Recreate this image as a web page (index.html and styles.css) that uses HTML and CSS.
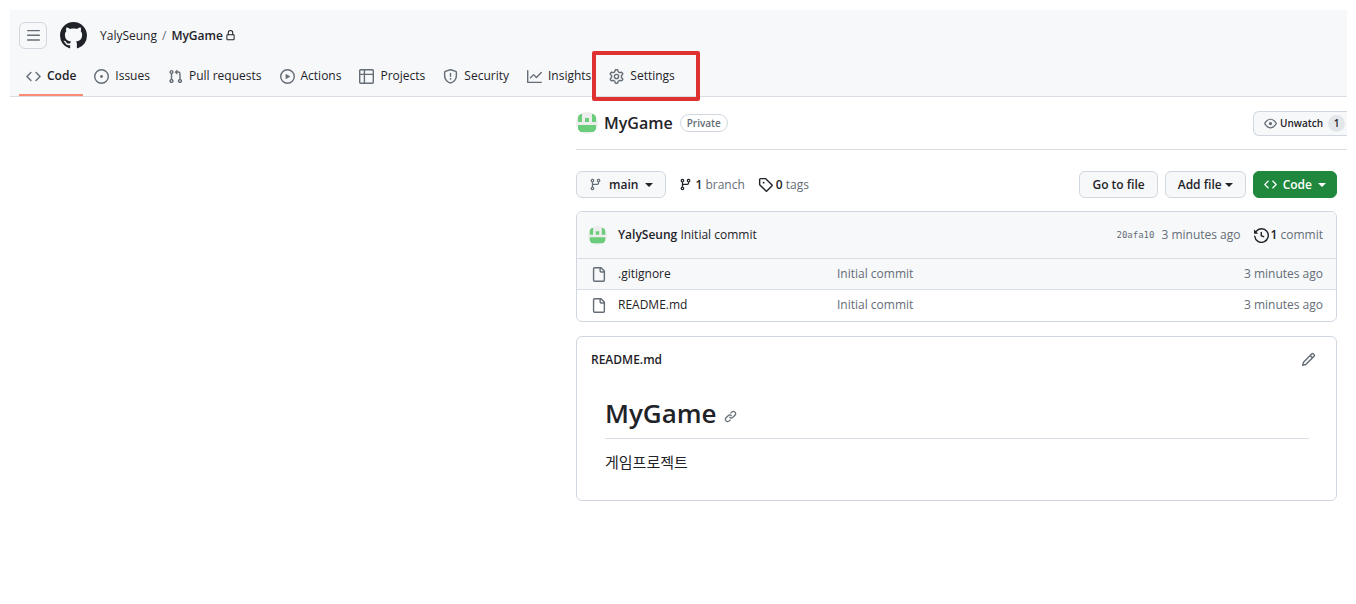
FILE: index.html
```html
<!DOCTYPE html>
<html lang="en">
<head>
<meta charset="utf-8">
<meta name="viewport" content="width=device-width, initial-scale=1">
<title>YalySeung/MyGame</title>
<link rel="stylesheet" href="styles.css">
</head>
<body>
<svg class="sprite" aria-hidden="true">
  <symbol id="i-menu" viewBox="0 0 16 16"><path d="M1 2.75A.75.75 0 0 1 1.75 2h12.500a.75.75 0 0 1 0 1.500H1.750A.75.75 0 0 1 1 2.750Zm0 5A.75.75 0 0 1 1.750 7h12.500a.75.75 0 0 1 0 1.500H1.750A.75.75 0 0 1 1 7.750ZM1.750 12h12.500a.75.75 0 0 1 0 1.500H1.750a.75.75 0 0 1 0-1.500Z"/></symbol>
  <symbol id="i-mark" viewBox="0 0 16 16"><path d="M8 0c4.42 0 8 3.58 8 8a8.013 8.013 0 0 1-5.450 7.590c-.4.080-.550-.170-.550-.380 0-.270.010-1.130.010-2.200 0-.750-.250-1.230-.540-1.480 1.780-.2 3.650-.880 3.650-3.950 0-.880-.310-1.590-.820-2.150.080-.2.360-1.020-.080-2.120 0 0-.670-.220-2.200.820-.640-.180-1.320-.270-2-.270-.680 0-1.360.090-2 .270-1.530-1.030-2.200-.820-2.200-.820-.440 1.100-.160 1.920-.080 2.120-.510.560-.820 1.280-.820 2.150 0 3.060 1.860 3.750 3.640 3.950-.230.200-.440.550-.510 1.070-.460.210-1.610.550-2.330-.660-.150-.240-.600-.830-1.230-.820-.670.010-.270.380.010.530.340.190.730.900.820 1.130.160.450.680 1.310 2.690.940 0 .670.010 1.300.010 1.490 0 .210-.150.450-.550.380A7.995 7.995 0 0 1 0 8c0-4.420 3.580-8 8-8Z"/></symbol>
  <symbol id="i-lock" viewBox="0 0 16 16"><path d="M4 4a4 4 0 0 1 8 0v2h.25c.966 0 1.750.784 1.750 1.750v5.500A1.750 1.750 0 0 1 12.250 15h-8.500A1.750 1.750 0 0 1 2 13.250v-5.500C2 6.784 2.784 6 3.750 6H4Zm8.250 3.500h-8.500a.25.25 0 0 0-.25.25v5.500c0 .138.112.25.25.25h8.500a.25.25 0 0 0 .25-.25v-5.500a.25.25 0 0 0-.25-.25ZM10.500 6V4a2.500 2.500 0 1 0-5 0v2Z"/></symbol>
  <symbol id="i-code" viewBox="0 0 16 16"><path d="m11.280 3.220 4.250 4.250a.75.75 0 0 1 0 1.060l-4.250 4.250a.749.749 0 0 1-1.275-.326.749.749 0 0 1 .215-.734L13.940 8l-3.720-3.720a.749.749 0 0 1 .326-1.275.749.749 0 0 1 .734.215Zm-6.560 0a.751.751 0 0 1 1.042.018.751.751 0 0 1 .018 1.042L2.060 8l3.720 3.720a.749.749 0 0 1-.326 1.275.749.749 0 0 1-.734-.215L.47 8.530a.75.75 0 0 1 0-1.060Z"/></symbol>
  <symbol id="i-issue" viewBox="0 0 16 16"><path d="M8 9.500a1.500 1.500 0 1 0 0-3 1.500 1.500 0 0 0 0 3Z"/><path d="M8 0a8 8 0 1 1 0 16A8 8 0 0 1 8 0ZM1.500 8a6.500 6.500 0 1 0 13 0 6.500 6.500 0 0 0-13 0Z"/></symbol>
  <symbol id="i-pull" viewBox="0 0 16 16"><path d="M1.500 3.250a2.250 2.250 0 1 1 3 2.122v5.256a2.251 2.251 0 1 1-1.500 0V5.372A2.250 2.250 0 0 1 1.500 3.250Zm5.677-.177L9.573.677A.25.25 0 0 1 10 .854V2.500h1A2.500 2.500 0 0 1 13.500 5v5.628a2.251 2.251 0 1 1-1.500 0V5a1 1 0 0 0-1-1h-1v1.646a.25.25 0 0 1-.427.177L7.177 3.427a.25.25 0 0 1 0-.354ZM3.750 2.500a.75.75 0 1 0 0 1.500.75.75 0 0 0 0-1.500Zm0 9.500a.75.75 0 1 0 0 1.500.75.75 0 0 0 0-1.500Zm8.250.75a.75.75 0 1 0 1.500 0 .75.75 0 0 0-1.500 0Z"/></symbol>
  <symbol id="i-play" viewBox="0 0 16 16"><path d="M8 0a8 8 0 1 1 0 16A8 8 0 0 1 8 0ZM1.500 8a6.500 6.500 0 1 0 13 0 6.500 6.500 0 0 0-13 0Zm4.879-2.773 4.264 2.559a.25.25 0 0 1 0 .428l-4.264 2.559A.25.25 0 0 1 6 10.559V5.442a.25.25 0 0 1 .379-.215Z"/></symbol>
  <symbol id="i-table" viewBox="0 0 16 16"><path d="M0 1.750C0 .784.784 0 1.750 0h12.500C15.216 0 16 .784 16 1.750v12.500A1.750 1.750 0 0 1 14.250 16H1.750A1.750 1.750 0 0 1 0 14.250ZM6.500 6.500v8h7.750a.25.25 0 0 0 .25-.25V6.500Zm8-1.500V1.750a.25.25 0 0 0-.25-.25H6.500V5Zm-13 1.500v7.750c0 .138.112.25.25.25H5v-8ZM5 5V1.500H1.750a.25.25 0 0 0-.25.25V5Z"/></symbol>
  <symbol id="i-shield" viewBox="0 0 16 16"><path d="M7.467.133a1.748 1.748 0 0 1 1.066 0l5.250 1.680A1.750 1.750 0 0 1 15 3.480V7c0 1.566-.320 3.182-1.303 4.682-.983 1.498-2.585 2.813-5.032 3.855a1.697 1.697 0 0 1-1.330 0c-2.447-1.042-4.049-2.357-5.032-3.855C1.320 10.182 1 8.566 1 7V3.480a1.750 1.750 0 0 1 1.217-1.667Zm.61 1.429a.25.25 0 0 0-.153 0l-5.250 1.680a.25.25 0 0 0-.174.238V7c0 1.358.275 2.666 1.057 3.860.784 1.194 2.121 2.340 4.366 3.297a.196.196 0 0 0 .154 0c2.245-.956 3.582-2.104 4.366-3.298C13.225 9.666 13.500 8.360 13.500 7V3.480a.251.251 0 0 0-.174-.237l-5.250-1.680ZM8.750 4.750v3a.75.75 0 0 1-1.500 0v-3a.75.75 0 0 1 1.500 0ZM9 10.500a1 1 0 1 1-2 0 1 1 0 0 1 2 0Z"/></symbol>
  <symbol id="i-graph" viewBox="0 0 16 16"><path d="M1.500 1.750V13.500h13.750a.75.75 0 0 1 0 1.500H.75a.75.75 0 0 1-.75-.75V1.750a.75.75 0 0 1 1.500 0Zm14.280 2.530-5.250 5.250a.75.75 0 0 1-1.060 0L7 7.060 4.280 9.780a.751.751 0 0 1-1.042-.018.751.751 0 0 1-.018-1.042l3.250-3.250a.75.75 0 0 1 1.060 0L10 7.940l4.720-4.720a.751.751 0 0 1 1.042.018.751.751 0 0 1 .018 1.042Z"/></symbol>
  <symbol id="i-gear" viewBox="0 0 16 16"><path d="M8 0a8.200 8.200 0 0 1 .701.031C9.444.095 9.990.645 10.160 1.290l.288 1.107c.018.066.079.158.212.224.231.114.454.243.668.386.123.082.233.090.299.071l1.103-.303c.644-.176 1.392.021 1.820.630.270.385.506.792.704 1.218.315.675.111 1.422-.364 1.891l-.814.806c-.049.048-.098.147-.088.294.016.257.016.515 0 .772-.010.147.038.246.088.294l.814.806c.475.469.679 1.216.364 1.891a7.977 7.977 0 0 1-.704 1.217c-.428.610-1.176.807-1.820.630l-1.102-.302c-.067-.019-.177-.011-.300.071a5.909 5.909 0 0 1-.668.386c-.133.066-.194.158-.211.224l-.290 1.106c-.168.646-.715 1.196-1.458 1.260a8.006 8.006 0 0 1-1.402 0c-.743-.064-1.289-.614-1.458-1.260l-.289-1.106c-.018-.066-.079-.158-.212-.224a5.738 5.738 0 0 1-.668-.386c-.123-.082-.233-.090-.299-.071l-1.103.303c-.644.176-1.392-.021-1.820-.630a8.120 8.120 0 0 1-.704-1.218c-.315-.675-.111-1.422.363-1.891l.815-.806c.050-.048.098-.147.088-.294a6.214 6.214 0 0 1 0-.772c.010-.147-.038-.246-.088-.294l-.815-.806C.635 6.045.431 5.298.746 4.623a7.920 7.920 0 0 1 .704-1.217c.428-.610 1.176-.807 1.820-.630l1.102.302c.067.019.177.011.300-.071.214-.143.437-.272.668-.386.133-.066.194-.158.211-.224l.290-1.106C6.009.645 6.556.095 7.299.030 7.530.010 7.764 0 8 0Zm-.571 1.525c-.036.003-.108.036-.137.146l-.289 1.105c-.147.561-.549.967-.998 1.189-.173.086-.340.183-.500.290-.417.278-.970.423-1.529.270l-1.103-.303c-.109-.030-.175.016-.195.045-.220.312-.412.644-.573.990-.014.031-.021.110.059.190l.815.806c.411.406.562.957.530 1.456a4.709 4.709 0 0 0 0 .582c.032.499-.119 1.050-.530 1.456l-.815.806c-.081.080-.073.159-.059.190.162.346.353.677.573.989.020.030.085.076.195.046l1.102-.303c.560-.153 1.113-.008 1.530.270.161.107.328.204.501.290.447.222.850.629.997 1.189l.289 1.105c.029.109.101.143.137.146a6.600 6.600 0 0 0 1.142 0c.036-.003.108-.036.137-.146l.289-1.105c.147-.561.549-.967.998-1.189.173-.086.340-.183.500-.290.417-.278.970-.423 1.529-.270l1.103.303c.109.029.175-.016.195-.045.220-.313.411-.644.573-.990.014-.031.021-.110-.059-.190l-.815-.806c-.411-.406-.562-.957-.530-1.456a4.709 4.709 0 0 0 0-.582c-.032-.499.119-1.050.530-1.456l.815-.806c.081-.080.073-.159.059-.190a6.464 6.464 0 0 0-.573-.989c-.020-.030-.085-.076-.195-.046l-1.102.303c-.560.153-1.113.008-1.530-.270a4.440 4.440 0 0 0-.501-.290c-.447-.222-.850-.629-.997-1.189l-.289-1.105c-.029-.110-.101-.143-.137-.146a6.600 6.600 0 0 0-1.142 0ZM11 8a3 3 0 1 1-6 0 3 3 0 0 1 6 0ZM9.500 8a1.500 1.500 0 1 0-3.001.001A1.500 1.500 0 0 0 9.500 8Z"/></symbol>
  <symbol id="i-eye" viewBox="0 0 16 16"><path d="M8 2c1.981 0 3.671.992 4.933 2.078 1.270 1.091 2.187 2.345 2.637 3.023a1.620 1.620 0 0 1 0 1.798c-.450.678-1.367 1.932-2.637 3.023C11.670 13.008 9.981 14 8 14c-1.981 0-3.671-.992-4.933-2.078C1.797 10.830.880 9.576.430 8.898a1.620 1.620 0 0 1 0-1.798c.450-.677 1.367-1.931 2.637-3.022C4.330 2.992 6.019 2 8 2ZM1.679 7.932a.12.12 0 0 0 0 .136c.411.622 1.241 1.750 2.366 2.717C5.176 11.758 6.527 12.500 8 12.500c1.473 0 2.825-.742 3.955-1.715 1.124-.967 1.954-2.096 2.366-2.717a.12.12 0 0 0 0-.136c-.412-.621-1.242-1.750-2.366-2.717C10.824 4.242 9.473 3.500 8 3.500c-1.473 0-2.825.742-3.955 1.715-1.124.967-1.954 2.096-2.366 2.717ZM8 10a2 2 0 1 1-.001-3.999A2 2 0 0 1 8 10Z"/></symbol>
  <symbol id="i-branch" viewBox="0 0 16 16"><path d="M9.500 3.250a2.250 2.250 0 1 1 3 2.122V6A2.500 2.500 0 0 1 10 8.500H6a1 1 0 0 0-1 1v1.128a2.251 2.251 0 1 1-1.500 0V5.372a2.250 2.250 0 1 1 1.500 0v1.836A2.493 2.493 0 0 1 6 7h4a1 1 0 0 0 1-1v-.628A2.250 2.250 0 0 1 9.500 3.250Zm-6 0a.75.75 0 1 0 1.500 0 .75.75 0 0 0-1.500 0Zm8.250-.75a.75.75 0 1 0 0 1.500.75.75 0 0 0 0-1.500ZM4.250 12a.75.75 0 1 0 0 1.500.75.75 0 0 0 0-1.500Z"/></symbol>
  <symbol id="i-tag" viewBox="0 0 16 16"><path d="M1 7.775V2.750C1 1.784 1.784 1 2.750 1h5.025c.464 0 .910.184 1.238.513l6.250 6.250a1.750 1.750 0 0 1 0 2.474l-5.026 5.026a1.750 1.750 0 0 1-2.474 0l-6.250-6.250A1.752 1.752 0 0 1 1 7.775Zm1.500 0c0 .066.026.130.073.177l6.250 6.250a.25.25 0 0 0 .354 0l5.025-5.025a.25.25 0 0 0 0-.354l-6.250-6.250a.25.25 0 0 0-.177-.073H2.750a.25.25 0 0 0-.25.25ZM6 5a1 1 0 1 1 0 2 1 1 0 0 1 0-2Z"/></symbol>
  <symbol id="i-history" viewBox="0 0 16 16"><path d="m.427 1.927 1.215 1.215a8.002 8.002 0 1 1-1.600 5.685.75.75 0 1 1 1.493-.154 6.500 6.500 0 1 0 1.180-4.458l1.358 1.358A.25.25 0 0 1 3.896 6H.25A.25.25 0 0 1 0 5.750V2.104a.25.25 0 0 1 .427-.177ZM7.750 4a.75.75 0 0 1 .75.75v2.992l2.028.812a.75.75 0 0 1-.557 1.392l-2.500-1A.751.751 0 0 1 7 8.250v-3.500A.75.75 0 0 1 7.750 4Z"/></symbol>
  <symbol id="i-file" viewBox="0 0 16 16"><path d="M2 1.750C2 .784 2.784 0 3.750 0h6.586c.464 0 .909.184 1.237.513l2.914 2.914c.329.328.513.773.513 1.237v9.586A1.750 1.750 0 0 1 13.250 16h-9.500A1.750 1.750 0 0 1 2 14.250Zm1.750-.25a.25.25 0 0 0-.25.25v12.500c0 .138.112.25.25.25h9.500a.25.25 0 0 0 .25-.25V6h-2.750A1.750 1.750 0 0 1 9 4.250V1.500Zm6.750.062V4.250c0 .138.112.25.25.25h2.688l-.011-.013-2.914-2.914-.013-.011Z"/></symbol>
  <symbol id="i-pencil" viewBox="0 0 16 16"><path d="M11.013 1.427a1.750 1.750 0 0 1 2.474 0l1.086 1.086a1.750 1.750 0 0 1 0 2.474l-8.610 8.610c-.210.210-.470.364-.756.445l-3.251.930a.75.75 0 0 1-.927-.928l.929-3.250c.081-.286.235-.547.445-.758l8.610-8.610Zm.176 4.823L9.750 4.810l-6.286 6.287a.253.253 0 0 0-.064.108l-.558 1.953 1.953-.558a.253.253 0 0 0 .108-.064Zm1.238-3.763a.25.25 0 0 0-.354 0L10.811 3.750l1.439 1.440 1.263-1.263a.25.25 0 0 0 0-.354Z"/></symbol>
  <symbol id="i-link" viewBox="0 0 16 16"><path d="m7.775 3.275 1.250-1.250a3.500 3.500 0 1 1 4.950 4.950l-2.500 2.500a3.500 3.500 0 0 1-4.950 0 .751.751 0 0 1 .018-1.042.751.751 0 0 1 1.042-.018 1.998 1.998 0 0 0 2.830 0l2.500-2.500a2.002 2.002 0 0 0-2.830-2.830l-1.250 1.250a.751.751 0 0 1-1.042-.018.751.751 0 0 1-.018-1.042Zm-4.690 9.640a1.998 1.998 0 0 0 2.830 0l1.250-1.250a.751.751 0 0 1 1.042.018.751.751 0 0 1 .018 1.042l-1.250 1.250a3.500 3.500 0 1 1-4.950-4.950l2.500-2.500a3.500 3.500 0 0 1 4.950 0 .751.751 0 0 1-.018 1.042.751.751 0 0 1-1.042.018 1.998 1.998 0 0 0-2.830 0l-2.500 2.500a1.998 1.998 0 0 0 0 2.830Z"/></symbol>
  <symbol id="i-avatar" viewBox="0 0 22 22"><path fill="#ededed" d="M0 0h22v22H0z"/><path fill="#6bcd7b" d="M2 2h4v8H2zM16 2h4v8h-4zM9 6h4v4H9zM2 13h18v7H2z"/></symbol>
</svg>

<div class="page">
  <header class="header">
    <div class="topbar">
      <button class="menu-button" type="button" aria-label="Open menu"><svg class="icon"><use href="#i-menu"/></svg></button>
      <a class="home" href="#" aria-label="Homepage"><svg class="mark"><use href="#i-mark"/></svg></a>
      <nav class="crumbs" aria-label="Breadcrumb">
        <a href="#">YalySeung</a><span class="slash">/</span><a class="current" href="#">MyGame</a><svg class="icon-xs"><use href="#i-lock"/></svg>
      </nav>
    </div>
    <nav class="tabs" aria-label="Repository">
      <a class="tab selected" href="#"><svg class="icon"><use href="#i-code"/></svg>Code</a>
      <a class="tab" href="#"><svg class="icon"><use href="#i-issue"/></svg>Issues</a>
      <a class="tab" href="#"><svg class="icon"><use href="#i-pull"/></svg>Pull requests</a>
      <a class="tab" href="#"><svg class="icon"><use href="#i-play"/></svg>Actions</a>
      <a class="tab" href="#"><svg class="icon"><use href="#i-table"/></svg>Projects</a>
      <a class="tab" href="#"><svg class="icon"><use href="#i-shield"/></svg>Security</a>
      <a class="tab" href="#"><svg class="icon"><use href="#i-graph"/></svg>Insights</a>
      <a class="tab highlighted" href="#"><svg class="icon"><use href="#i-gear"/></svg>Settings</a>
    </nav>
  </header>

  <main class="main">
    <div class="repo-head">
      <svg class="avatar"><use href="#i-avatar"/></svg>
      <a class="repo-name" href="#">MyGame</a>
      <span class="label">Private</span>
      <button class="watch" type="button"><svg class="icon-sm"><use href="#i-eye"/></svg>Unwatch<span class="counter">1</span></button>
    </div>

    <div class="content">
      <div class="toolbar">
        <button class="btn branch-button" type="button"><svg class="icon-sm"><use href="#i-branch"/></svg>main<span class="caret"></span></button>
        <a class="stat" href="#"><svg class="icon-sm"><use href="#i-branch"/></svg><span><strong>1</strong> branch</span></a>
        <a class="stat" href="#"><svg class="icon"><use href="#i-tag"/></svg><span><strong>0</strong> tags</span></a>
        <div class="actions">
          <button class="btn" type="button">Go to file</button>
          <button class="btn add" type="button">Add file<span class="caret"></span></button>
          <button class="btn primary" type="button"><svg class="icon-sm"><use href="#i-code"/></svg>Code<span class="caret"></span></button>
        </div>
      </div>

      <section class="box files">
        <div class="commit">
          <svg class="avatar small"><use href="#i-avatar"/></svg>
          <p class="message"><a class="author" href="#">YalySeung</a> <a href="#">Initial commit</a></p>
          <a class="sha" href="#">20afa10</a>
          <span class="when">3 minutes ago</span>
          <a class="commits" href="#"><svg class="icon"><use href="#i-history"/></svg><span><strong>1</strong> commit</span></a>
        </div>
        <table class="listing">
          <tbody>
            <tr class="hover"><td class="kind"><svg class="icon"><use href="#i-file"/></svg></td><td class="name"><a href="#">.gitignore</a></td><td><a href="#">Initial commit</a></td><td class="age">3 minutes ago</td></tr>
            <tr><td class="kind"><svg class="icon"><use href="#i-file"/></svg></td><td class="name"><a href="#">README.md</a></td><td><a href="#">Initial commit</a></td><td class="age">3 minutes ago</td></tr>
          </tbody>
        </table>
      </section>

      <section class="box readme">
        <div class="readme-head">
          <h2>README.md</h2>
          <button class="edit" type="button" aria-label="Edit file"><svg class="icon"><use href="#i-pencil"/></svg></button>
        </div>
        <article class="prose">
          <h1>MyGame <a href="#" aria-label="Permalink"><svg class="icon-sm"><use href="#i-link"/></svg></a></h1>
          <p lang="ko">게임프로젝트</p>
        </article>
      </section>
    </div>
  </main>
</div>
</body>
</html>
```
FILE: styles.css
```css
* { box-sizing: border-box; }
body {
  margin: 0;
  padding: 10px 9px 10px 10px;
  background: #fff;
  color: #1f2328;
  font: 12px/18px "Open Sans", "Noto Sans CJK KR", sans-serif;
}
a { color: inherit; text-decoration: none; }
button { font: inherit; color: inherit; cursor: pointer; }
h1, h2, p { margin: 0; }
strong { font-weight: 600; color: #1f2328; }
svg { display: block; flex: none; fill: currentColor; }
.sprite { display: none; }
.icon { width: 15px; height: 15px; }
.icon-sm { width: 13px; height: 13px; }
.icon-xs { width: 11px; height: 11px; }
.page { overflow: hidden; }

.header {
  background: #f6f8fa;
  border-bottom: 1px solid #d8dee4;
  height: 87px;
  display: flex;
  flex-direction: column;
  justify-content: space-between;
}
.topbar {
  display: flex;
  align-items: center;
  padding: 12px 9px 0;
}
.menu-button {
  display: grid;
  place-items: center;
  width: 28px;
  height: 27px;
  padding: 0;
  border: 1px solid #d0d7de;
  border-radius: 6px;
  background: transparent;
  color: #656d76;
}
.home { margin: 0 13px; }
.mark { width: 27px; height: 27px; }
.crumbs { display: flex; align-items: center; }
.crumbs .slash { margin: 0 5px; color: #656d76; }
.crumbs .current { font-weight: 600; margin-right: 2px; }

.tabs { display: flex; gap: 4px; padding: 0 9px; }
.tab {
  position: relative;
  display: flex;
  align-items: center;
  gap: 6px;
  height: 40px;
  padding: 0 7px;
  white-space: nowrap;
}
.tab .icon { color: #656d76; }
.selected {
  font-weight: 600;
  box-shadow: inset 0 -2px #fd8c73;
}
.highlighted::after {
  content: "";
  position: absolute;
  inset: -5px -18px -5px -10px;
  border: 4px solid #e03131;
  border-radius: 2px;
}

.main {
  display: grid;
  grid-template-columns: 566fr 771fr;
}
.main > * { grid-column: 2; }
.repo-head {
  display: flex;
  align-items: center;
  height: 53px;
  border-bottom: 1px solid #d8dee4;
}
.avatar { width: 22px; height: 22px; border-radius: 50%; }
.avatar.small { width: 19px; height: 19px; }
.repo-name {
  margin: 0 7px 0 6px;
  font-size: 16px;
  line-height: 24px;
  font-weight: 600;
}
.label {
  padding: 0 6px;
  border: 1px solid #d0d7de;
  border-radius: 12px;
  color: #656d76;
  font-size: 10px;
  line-height: 16px;
  font-weight: 600;
}
.watch {
  display: flex;
  align-items: center;
  gap: 3px;
  height: 25px;
  margin-left: auto;
  padding: 0 2px 0 10px;
  border: 1px solid #d0d7de;
  border-right: 0;
  border-radius: 6px 0 0 6px;
  background: #f6f8fa;
  font-size: 10px;
  font-weight: 600;
}
.watch .icon-sm { color: #656d76; }
.counter {
  min-width: 17px;
  margin-left: 2px;
  border-radius: 9px;
  background: #e4e7ea;
  line-height: 17px;
  text-align: center;
}

.content { padding: 21px 10px 0 0; }
.toolbar {
  display: flex;
  align-items: center;
  gap: 13px;
  margin-bottom: 13px;
}
.btn {
  display: flex;
  align-items: center;
  justify-content: center;
  gap: 7px;
  height: 27px;
  padding: 0 12px;
  border: 1px solid #d0d7de;
  border-radius: 6px;
  background: #f6f8fa;
  font-weight: 600;
}
.btn .icon-sm { color: #656d76; }
.caret {
  border: 4px solid transparent;
  border-top-color: currentColor;
  border-bottom: 0;
}
.add { gap: 3px; }
.primary {
  gap: 6px;
  padding: 0 10px;
  border-color: #1f883d;
  background: #1f883d;
  color: #fff;
}
.primary .icon-sm { color: #fff; }
.stat { display: flex; align-items: center; gap: 3px; color: #656d76; }
.stat svg { color: #1f2328; }
.actions { display: flex; gap: 7px; margin-left: auto; }

.box {
  border: 1px solid #d0d7de;
  border-radius: 6px;
  overflow: hidden;
}
.commit {
  display: flex;
  align-items: center;
  height: 46px;
  padding: 0 13px 0 11px;
  background: #f6f8fa;
}
.message { margin: 0 auto 0 11px; }
.author { font-weight: 600; }
.sha {
  margin-right: 7px;
  color: #656d76;
  font: 9px/18px "DejaVu Sans Mono", monospace;
}
.when { color: #656d76; }
.commits {
  display: flex;
  align-items: center;
  gap: 2px;
  margin-left: 13px;
  color: #656d76;
}
.commits svg { color: #1f2328; }
.listing {
  width: 100%;
  border-collapse: collapse;
  table-layout: fixed;
  color: #656d76;
}
.listing td { height: 31px; padding: 0; border-top: 1px solid #d8dee4; }
.listing .hover { background: #f6f8fa; }
.listing .kind { width: 41px; padding-left: 14px; }
.listing .name { width: 219px; color: #1f2328; }
.listing .age { padding-right: 13px; text-align: right; }

.readme { margin-top: 14px; }
.readme-head {
  display: flex;
  align-items: center;
  justify-content: space-between;
  padding: 14px 20px 14px 14px;
}
.readme-head h2 { font-size: 12px; line-height: 18px; font-weight: 600; }
.edit { padding: 0; border: 0; background: none; color: #656d76; }
.prose { padding: 12px 27px 27px 28px; }
.prose h1 {
  display: flex;
  align-items: baseline;
  gap: 7px;
  padding-bottom: 7px;
  border-bottom: 1px solid #d8dee4;
  font-size: 26px;
  line-height: 36px;
  font-weight: 600;
}
.prose h1 a { color: #656d76; }
.prose p { margin-top: 13px; font-size: 15px; line-height: 21px; }
```
